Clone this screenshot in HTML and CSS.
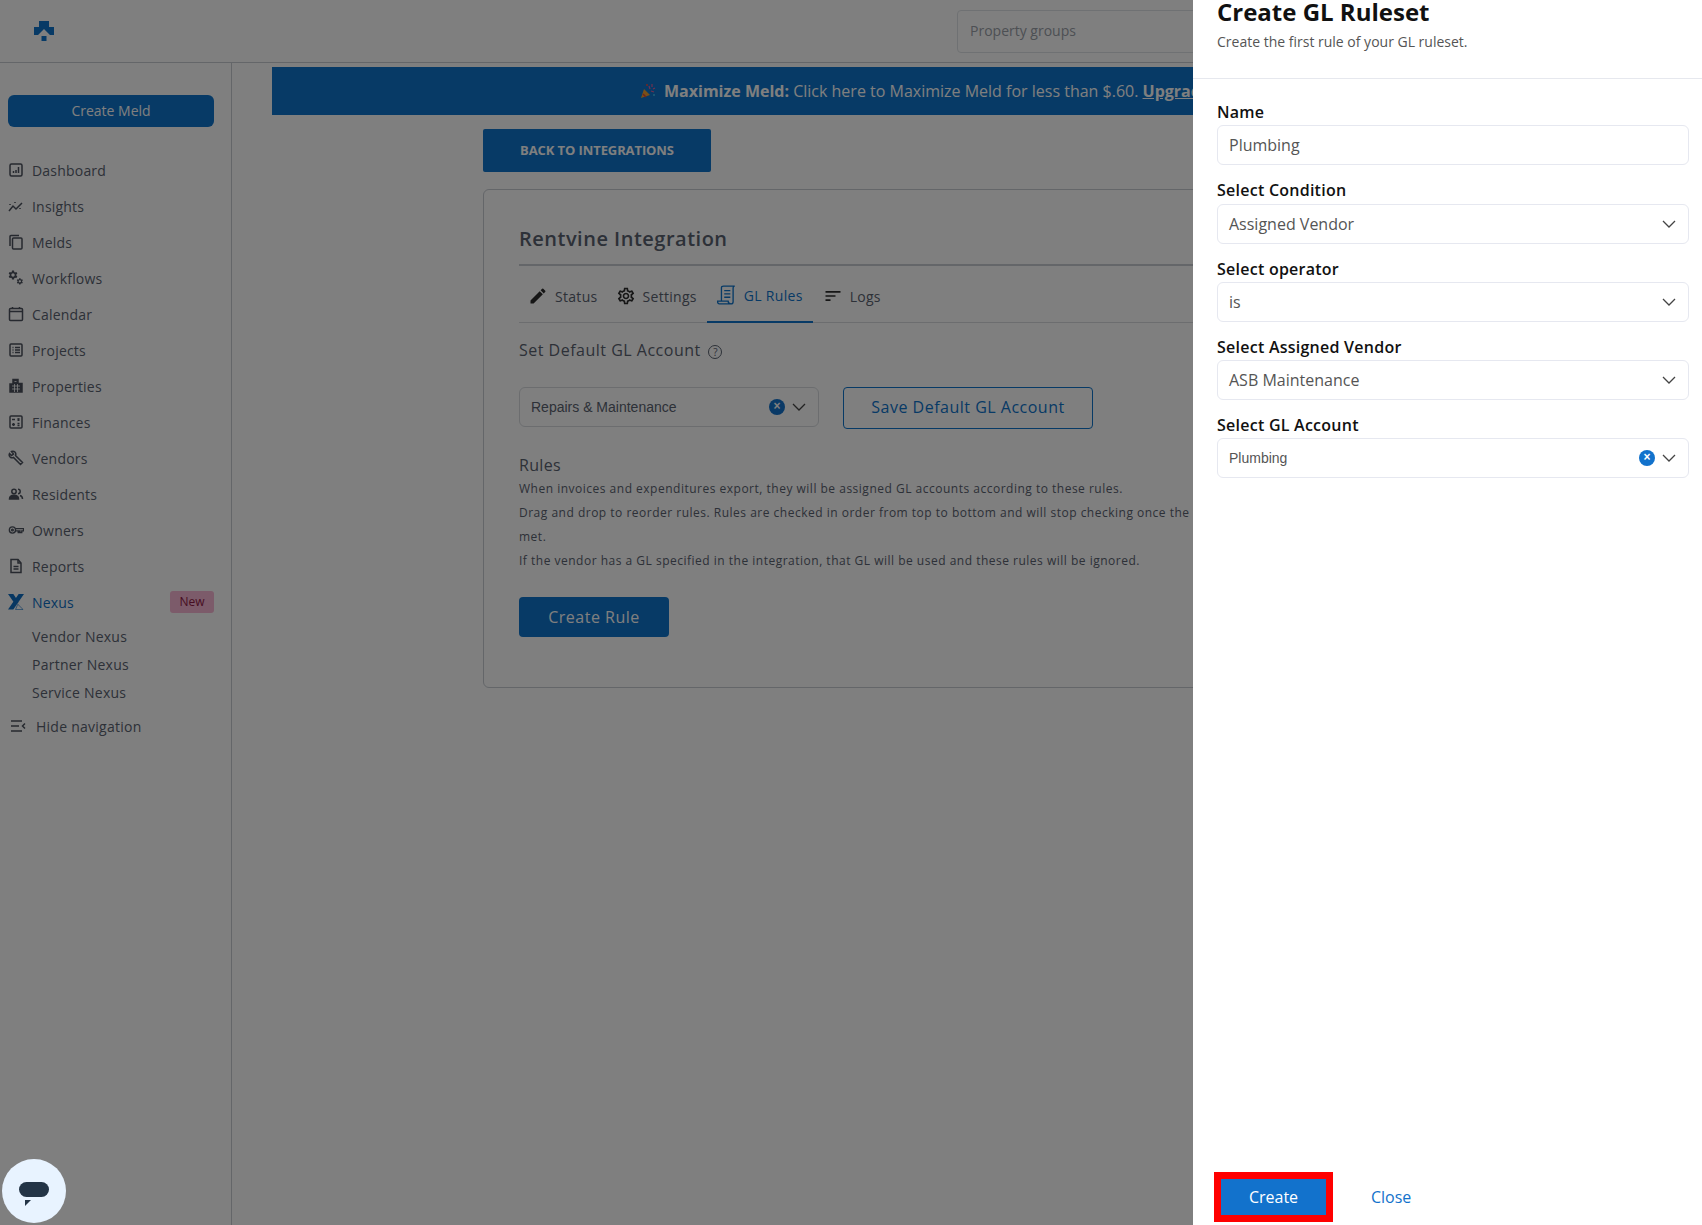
FILE: index.html
```html
<!DOCTYPE html>
<html lang="en">
<head>
	<meta charset="UTF-8">
	<title>Rentvine Integration</title>
	<link rel="stylesheet" href="styles.css">
</head>
<body>
	<div class="app">
		<header class="topbar">
			<svg class="logo" viewBox="0 0 20 20"><path d="M5 0h10v6h5v8h-4l-6-6-6 6H0V6h5z"/><path d="M7.500 15h5v5h-5z"/></svg>
			<div class="search">Property groups</div>
		</header>
		<div class="layout">
			<aside class="sidebar">
				<div class="create-meld">Create Meld</div>
				<ul class="nav">
					<li><svg viewBox="0 0 16 16"><rect x="2" y="2" width="12" height="12" rx="1.500"/><path d="M5.500 11V9M8 11V8M10.500 11V5"/></svg>Dashboard</li>
					<li><svg viewBox="0 0 16 16"><path d="M1 13l4-5 3 3 6-6"/><path d="M2 6v1M7 4v1M12 10v1"/></svg>Insights</li>
					<li><svg viewBox="0 0 16 16"><path d="M2 12V2.500A1 1 0 013 1.500h8"/><rect x="4.500" y="4" width="9.500" height="11" rx="1"/></svg>Melds</li>
					<li><svg viewBox="0 0 16 16"><g class="gear"><path id="gear" transform="translate(-.5 -.5) scale(.46)" d="M19.140 12.940c.04-.3.06-.61.06-.94 0-.32-.02-.64-.07-.94l2.030-1.580a.49.49 0 00.12-.61l-1.920-3.320a.488.488 0 00-.59-.22l-2.390.96c-.5-.38-1.030-.7-1.620-.94l-.36-2.540a.484.484 0 00-.48-.41h-3.840c-.24 0-.43.17-.47.41l-.36 2.540c-.59.24-1.130.57-1.620.94l-2.390-.96c-.22-.08-.47 0-.59.22L2.740 8.870c-.12.21-.08.47.12.61l2.030 1.580c-.05.3-.09.63-.09.94s.02.64.07.94l-2.030 1.580a.49.49 0 00-.12.61l1.920 3.320c.12.22.37.29.59.22l2.390-.96c.5.38 1.030.7 1.620.94l.36 2.540c.05.24.24.41.48.41h3.840c.24 0 .44-.17.47-.41l.36-2.540c.59-.24 1.130-.56 1.620-.94l2.390.96c.22.08.47 0 .59-.22l1.920-3.320c.12-.22.07-.47-.12-.61l-2.010-1.580zM12 15.600c-1.980 0-3.600-1.620-3.600-3.600s1.620-3.600 3.600-3.600 3.600 1.620 3.600 3.600-1.620 3.600-3.600 3.600z"/><path transform="translate(8 7.500) scale(.32)" d="M19.140 12.940c.04-.3.06-.61.06-.94 0-.32-.02-.64-.07-.94l2.030-1.580a.49.49 0 00.12-.61l-1.920-3.320a.488.488 0 00-.59-.22l-2.390.96c-.5-.38-1.030-.7-1.620-.94l-.36-2.540a.484.484 0 00-.48-.41h-3.840c-.24 0-.43.17-.47.41l-.36 2.540c-.59.24-1.130.57-1.620.94l-2.390-.96c-.22-.08-.47 0-.59.22L2.740 8.870c-.12.21-.08.47.12.61l2.030 1.580c-.05.3-.09.63-.09.94s.02.64.07.94l-2.030 1.580a.49.49 0 00-.12.61l1.920 3.320c.12.22.37.29.59.22l2.390-.96c.5.38 1.030.7 1.620.94l.36 2.540c.05.24.24.41.48.41h3.840c.24 0 .44-.17.47-.41l.36-2.540c.59-.24 1.130-.56 1.620-.94l2.390.96c.22.08.47 0 .59-.22l1.920-3.320c.12-.22.07-.47-.12-.61l-2.010-1.580zM12 15.600c-1.980 0-3.600-1.620-3.600-3.600s1.620-3.600 3.600-3.600 3.600 1.620 3.600 3.600-1.620 3.600-3.600 3.600z"/></g></svg>Workflows</li>
					<li><svg viewBox="0 0 16 16"><rect x="1.500" y="2.500" width="13" height="12" rx="1"/><path d="M1.500 5.500h13M4.500 1v2M11.500 1v2"/></svg>Calendar</li>
					<li><svg viewBox="0 0 16 16"><rect x="2" y="2" width="12" height="12" rx="1"/><path d="M4.500 5.500h1M7 5.500h5M4.500 8h1M7 8h5M4.500 10.500h1M7 10.500h5"/></svg>Projects</li>
					<li><svg viewBox="0 0 16 16"><path class="solid" d="M5 1.500h5v4h4V14H2V6h3z"/><path class="cut" d="M6.500 3.500h2M4 8h8M4 11h8M6.500 6v8M9.500 6v8"/></svg>Properties</li>
					<li><svg viewBox="0 0 16 16"><rect x="2" y="2" width="12" height="12" rx="1"/><path d="M4 5.500h3M9.500 4.500l2 2M11.500 4.500l-2 2M4 10.500h3M5.500 9v3M9.500 9.500h2M9.500 11.500h2"/></svg>Finances</li>
					<li><svg viewBox="0 0 16 16"><path d="M1.500 3.500L3.500 5.500 5.500 4 3.500 1.500a3 3 0 014 4l7 7-2 2-7-7a3 3 0 01-4-4z"/></svg>Vendors</li>
					<li><svg viewBox="0 0 16 16"><circle cx="6" cy="5.500" r="2.200"/><path class="solid" d="M1.500 13c0-2.500 2-3.800 4.500-3.800s4.500 1.300 4.500 3.800z"/><path d="M10 3.300a2.200 2.200 0 010 4.400M12 9.500c1.500.4 2.500 1.600 2.500 3.500"/></svg>Residents</li>
					<li><svg viewBox="0 0 18 16"><circle cx="5" cy="8" r="3.500"/><circle cx="5" cy="8" r="1"/><path d="M8.500 6.500h9V9h-2v2h-2V9h-1v2h-1V9H8.500"/></svg>Owners</li>
					<li><svg viewBox="0 0 16 16"><path d="M3 1.500h7l3 3.500v9.500H3z"/><path d="M5.500 8.500h5M5.500 11h5M10 1.500V5h3"/></svg>Reports</li>
					<li class="nexus">
						<svg viewBox="0 0 18 18"><path class="solid" d="M0 0h6l6 9-3 4zM12 0h6L6 17.500H0z"/><path d="M11 11.500l6 6H8.500z"/></svg>
						Nexus
						<span class="badge">New</span>
					</li>
				</ul>
				<ul class="subnav">
					<li>Vendor Nexus</li>
					<li>Partner Nexus</li>
					<li>Service Nexus</li>
				</ul>
				<div class="hide-nav"><svg viewBox="0 0 16 16"><path d="M1 3h11M1 8h8M1 13h11M15 5.500L12.500 8l2.500 2.500"/></svg>Hide navigation</div>
			</aside>
			<main class="main">
				<div class="banner">
					<svg class="popper" viewBox="0 0 16 16"><path d="M1 15l3-9 6 6z" fill="#f0a030"/><path d="M3 11l3 3" stroke="#e0443c" stroke-width="1.500"/><path d="M9 3l1 3M12 1v3M13 6l2-1M11 8l3 1" stroke="#e060a0" stroke-width="1.200"/><circle cx="7" cy="2" r="1" fill="#f04a40"/><circle cx="14" cy="12" r="1" fill="#40c0f0"/></svg>
					<b>Maximize Meld:</b>&nbsp;Click here to Maximize Meld for less than $.60.&nbsp;<b><u>Upgrade Now</u></b>
				</div>
				<div class="content">
					<div class="back-btn">BACK TO INTEGRATIONS</div>
					<section class="card">
						<h2 class="card-title">Rentvine Integration</h2>
						<div class="tabs">
							<div class="tab tab-status"><svg viewBox="0 0 24 24"><path d="M3 17.250V21h3.750L17.810 9.940l-3.750-3.750L3 17.250zM20.710 7.040a1 1 0 000-1.410l-2.340-2.340a1 1 0 00-1.410 0l-1.830 1.830 3.750 3.750 1.830-1.830z"/></svg>Status</div>
							<div class="tab"><svg viewBox="0 0 24 24"><path d="M19.430 12.980c.04-.32.07-.64.07-.98 0-.34-.03-.66-.07-.98l2.110-1.650c.19-.15.24-.42.12-.64l-2-3.460c-.09-.16-.26-.25-.44-.25-.06 0-.12.01-.17.03l-2.490 1c-.52-.4-1.080-.73-1.690-.98l-.38-2.650C14.460 2.180 14.250 2 14 2h-4c-.25 0-.46.18-.49.42l-.38 2.650c-.61.25-1.170.59-1.690.98l-2.490-1c-.06-.02-.12-.03-.18-.03-.17 0-.34.09-.43.25l-2 3.460c-.13.22-.07.49.12.64l2.110 1.650c-.04.32-.07.65-.07.98 0 .33.03.66.07.98l-2.110 1.650c-.19.15-.24.42-.12.64l2 3.460c.09.16.26.25.44.25.06 0 .12-.01.17-.03l2.490-1c.52.4 1.080.73 1.690.98l.38 2.650c.03.24.24.42.49.42h4c.25 0 .46-.18.49-.42l.38-2.650c.61-.25 1.170-.59 1.690-.98l2.490 1c.06.02.12.03.18.03.17 0 .34-.09.43-.25l2-3.460c.12-.22.07-.49-.12-.64l-2.110-1.650zm-1.980-1.710c.04.31.05.52.05.73 0 .21-.02.43-.05.73l-.14 1.130.89.7 1.080.84-.7 1.210-1.270-.51-1.040-.42-.9.68c-.43.32-.84.56-1.250.73l-1.060.43-.16 1.130-.2 1.350h-1.400l-.19-1.350-.16-1.130-1.060-.43c-.43-.18-.83-.41-1.230-.71l-.91-.7-1.060.43-1.270.51-.7-1.210 1.080-.84.89-.7-.14-1.130c-.03-.31-.05-.54-.05-.74s.02-.43.05-.73l.14-1.130-.89-.7-1.080-.84.7-1.210 1.270.51 1.040.42.9-.68c.43-.32.84-.56 1.250-.73l1.060-.43.16-1.130.2-1.350h1.390l.19 1.350.16 1.130 1.060.43c.43.18.83.41 1.230.71l.91.7 1.060-.43 1.270-.51.7 1.210-1.070.85-.89.7.14 1.130zM12 8c-2.210 0-4 1.790-4 4s1.790 4 4 4 4-1.790 4-4-1.790-4-4-4zm0 6c-1.100 0-2-.9-2-2s.9-2 2-2 2 .9 2 2-.9 2-2 2z"/></svg>Settings</div>
							<div class="tab active"><svg class="scroll" viewBox="0 0 18 18"><path d="M4 14V2.500C4 1.500 5 1 6 1h10c-1 0-1.500.7-1.500 1.500V15c0 1-1 2-2 2H2c-1 0-1.500-1-1.500-2.500h9.500c0 1.200.7 2.500 2.500 2.500"/><path d="M6.500 5h5.500M6.500 8h5.500M6.500 11h5.500"/></svg>GL Rules</div>
							<div class="tab"><svg viewBox="0 0 24 24"><path d="M3 18h6v-2H3v2zM3 6v2h18V6H3zm0 7h12v-2H3v2z"/></svg>Logs</div>
						</div>
						<div class="default-label">Set Default GL Account <span class="help">?</span></div>
						<div class="default-row">
							<div class="select">
								Repairs &amp; Maintenance
								<span class="clear">&#215;</span>
								<svg class="chevron" viewBox="0 0 14 8"><path d="M1 1l6 6 6-6"/></svg>
							</div>
							<div class="save-btn">Save Default GL Account</div>
						</div>
						<h3 class="rules-title">Rules</h3>
						<p class="rules-text">When invoices and expenditures export, they will be assigned GL accounts according to these rules.<br>
						Drag and drop to reorder rules. Rules are checked in order from top to bottom and will stop checking once the first rule is<br>
						met.<br>
						If the vendor has a GL specified in the integration, that GL will be used and these rules will be ignored.</p>
						<div class="create-rule">Create Rule</div>
					</section>
				</div>
			</main>
		</div>

		<div class="overlay"></div>

		<aside class="panel">
			<div class="panel-head">
				<h1>Create GL Ruleset</h1>
				<p>Create the first rule of your GL ruleset.</p>
			</div>
			<form class="panel-form">
				<div class="field">
					<label>Name</label>
					<div class="input">Plumbing</div>
				</div>
				<div class="field field-condition">
					<label>Select Condition</label>
					<div class="input">Assigned Vendor<svg class="chevron" viewBox="0 0 14 8"><path d="M1 1l6 6 6-6"/></svg></div>
				</div>
				<div class="field">
					<label>Select operator</label>
					<div class="input">is<svg class="chevron" viewBox="0 0 14 8"><path d="M1 1l6 6 6-6"/></svg></div>
				</div>
				<div class="field">
					<label>Select Assigned Vendor</label>
					<div class="input">ASB Maintenance<svg class="chevron" viewBox="0 0 14 8"><path d="M1 1l6 6 6-6"/></svg></div>
				</div>
				<div class="field">
					<label>Select GL Account</label>
					<div class="input input-arial">Plumbing<span class="clear">&#215;</span><svg class="chevron" viewBox="0 0 14 8"><path d="M1 1l6 6 6-6"/></svg></div>
				</div>
			</form>
			<div class="panel-foot">
				<div class="create-btn">Create</div>
				<div class="close-btn">Close</div>
			</div>
		</aside>

		<div class="chat">
			<svg viewBox="0 0 30 24"><rect width="30" height="15" rx="7.500"/><path d="M6 18h6l-6 6z"/></svg>
		</div>
	</div>
</body>
</html>
```

FILE: styles.css
```css
*{
	margin: 0px;
	padding: 0px;
	box-sizing: border-box;
}
ul{
	list-style: none;
}
body{
	font-family: "Open Sans", "Liberation Sans", sans-serif;
	color: #5a6270;
	background-color: #fff;
}
.app{
	width: 1702px;
	height: 1225px;
	position: relative;
	overflow: hidden;
	display: flex;
	flex-direction: column;
}

/* top bar */
.topbar{
	height: 63px;
	flex: none;
	display: flex;
	align-items: center;
	justify-content: space-between;
	padding-left: 34px;
	border-bottom: 1px solid #c8ccd2;
}
.logo{
	width: 20px;
	height: 20px;
	margin-top: -1px;
	fill: #0e74cc;
}
.search{
	width: 400px;
	height: 43px;
	margin-right: 345px;
	padding-left: 12px;
	line-height: 40px;
	font-size: 14px;
	color: #9aa0a8;
	border: 1px solid #dfe2e6;
	border-radius: 4px;
}

/* sidebar */
.layout{
	flex: 1;
	display: flex;
	min-height: 0;
}
.sidebar{
	width: 232px;
	flex: none;
	padding: 32px 17px 0 8px;
	border-right: 1px solid #c8ccd2;
}
.create-meld{
	height: 32px;
	line-height: 32px;
	text-align: center;
	font-size: 14px;
	color: #fff;
	background-color: #0e74cc;
	border-radius: 6px;
}
.nav{
	margin-top: 25px;
}
.nav>li{
	height: 36px;
	display: flex;
	align-items: center;
	font-size: 14px;
	font-weight: 500;
	letter-spacing: .2px;
}
.nav svg,
.hide-nav svg{
	width: 16px;
	height: 16px;
	flex: none;
	margin-right: 8px;
	fill: none;
	stroke: #4c525e;
	stroke-width: 1.500;
}
.nav svg .solid{
	fill: #4c525e;
}
.nav svg .cut{
	stroke: #fff;
	stroke-width: .8;
}
.nav svg .gear{
	fill: #4c525e;
	stroke: none;
}
.nexus{
	color: #0e6fc4;
}
.nav .nexus svg{
	stroke: #0e6fc4;
	stroke-width: .7;
}
.nav .nexus svg .solid{
	fill: #0e6fc4;
	stroke: none;
}
.badge{
	margin-left: auto;
	margin-top: -1px;
	width: 44px;
	height: 22px;
	line-height: 21px;
	text-align: center;
	font-size: 12px;
	letter-spacing: 0px;
	color: #8e1a45;
	background-color: #f9b6d4;
	border-radius: 3px;
}
.subnav{
	margin-top: 3px;
	padding-left: 24px;
}
.subnav>li{
	height: 28px;
	line-height: 28px;
	font-size: 14px;
	font-weight: 500;
	letter-spacing: .25px;
}
.hide-nav{
	display: flex;
	align-items: center;
	height: 36px;
	margin-top: 1px;
	padding-left: 2px;
	font-size: 14px;
	font-weight: 500;
	letter-spacing: .25px;
}
.hide-nav svg{
	margin-right: 10px;
}

/* main column */
.main{
	flex: 1;
	min-width: 0;
	padding: 4px 0 0 40px;
}
.banner{
	height: 48px;
	display: flex;
	align-items: center;
	padding-left: 368px;
	font-size: 16px;
	color: #fff;
	background-color: #0e74cc;
	white-space: nowrap;
}
.popper{
	width: 16px;
	height: 16px;
	margin-right: 8px;
	fill: none;
}
.content{
	padding: 14px 0 0 211px;
}
.back-btn{
	width: 228px;
	height: 43px;
	line-height: 43px;
	text-align: center;
	font-size: 13px;
	font-weight: 700;
	letter-spacing: -.1px;
	color: #fff;
	background-color: #0e74cc;
	border-radius: 2px;
}
.card{
	width: 1180px;
	height: 499px;
	margin-top: 17px;
	padding: 0 35px;
	border: 1px solid #c8ccd2;
	border-radius: 6px;
}
.card-title{
	height: 76px;
	padding-top: 34px;
	line-height: 30px;
	font-size: 20px;
	font-weight: 600;
	letter-spacing: .5px;
	border-bottom: 2px solid #c8ccd2;
}
.tabs{
	display: flex;
	height: 57px;
	border-bottom: 1px solid #d8dbdf;
}
.tab{
	display: flex;
	align-items: center;
	height: 57px;
	padding: 3px 10px 0;
	font-size: 14px;
	letter-spacing: .3px;
}
.tab svg{
	width: 20px;
	height: 20px;
	margin-right: 7px;
	fill: #2d2d2d;
}
.tab-status{
	padding-left: 9px;
	padding-right: 8px;
}
.tab.active{
	color: #0e74cc;
	border-bottom: 2px solid #0e74cc;
}
.tab svg.scroll{
	fill: none;
	stroke: #0e74cc;
	stroke-width: 1.200;
}
.default-label{
	margin-top: 14px;
	line-height: 26px;
	font-size: 16px;
	letter-spacing: .5px;
}
.help{
	display: inline-block;
	width: 14px;
	height: 14px;
	margin-left: 3px;
	line-height: 12px;
	text-align: center;
	font-size: 10px;
	letter-spacing: 0px;
	vertical-align: 0px;
	border: 1px solid #5a6270;
	border-radius: 50%;
}
.default-row{
	display: flex;
	gap: 24px;
	margin-top: 24px;
}
.select{
	display: flex;
	align-items: center;
	width: 300px;
	height: 40px;
	padding: 0 12px 0 11px;
	font-family: "Liberation Sans", sans-serif;
	font-size: 14px;
	border: 1px solid #d8dbdf;
	border-radius: 6px;
}
.clear{
	width: 16px;
	height: 16px;
	margin-left: auto;
	line-height: 15px;
	text-align: center;
	font-family: "Liberation Sans", sans-serif;
	font-size: 12px;
	font-weight: 700;
	color: #fff;
	background-color: #1272cc;
	border-radius: 50%;
}
.chevron{
	width: 14px;
	height: 8px;
	flex: none;
	fill: none;
	stroke: #444;
	stroke-width: 1.300;
}
.clear+.chevron{
	margin-left: 7px;
}
.save-btn{
	width: 250px;
	height: 42px;
	line-height: 39px;
	text-align: center;
	font-size: 16px;
	letter-spacing: .5px;
	color: #0e74cc;
	border: 1px solid #0e74cc;
	border-radius: 4px;
}
.rules-title{
	margin-top: 24px;
	line-height: 24px;
	font-size: 16px;
	font-weight: 400;
	letter-spacing: .3px;
}
.rules-text{
	line-height: 24px;
	font-size: 12px;
	letter-spacing: .5px;
	white-space: nowrap;
}
.create-rule{
	width: 150px;
	height: 40px;
	margin-top: 24px;
	line-height: 40px;
	text-align: center;
	font-size: 16px;
	letter-spacing: .5px;
	color: #fff;
	background-color: #0e74cc;
	border-radius: 4px;
}

/* dimmed backdrop and the drawer on top of it */
.overlay{
	position: absolute;
	top: 0;
	right: 0;
	bottom: 0;
	left: 0;
	background-color: rgba(0,0,0,.5);
}
.panel{
	position: absolute;
	top: 0;
	right: 0;
	bottom: 0;
	width: 509px;
	display: flex;
	flex-direction: column;
	background-color: #fff;
}
.panel-head{
	height: 79px;
	flex: none;
	padding-left: 24px;
	border-bottom: 1px solid #e6e8ee;
}
.panel-head h1{
	margin-top: -5px;
	line-height: 34px;
	font-size: 24px;
	font-weight: 700;
	color: #111;
}
.panel-head p{
	margin-top: 3px;
	line-height: 20px;
	font-size: 14px;
	color: #555;
}
.panel-form{
	flex: 1;
	padding: 22px 13px 0 24px;
}
.field{
	height: 78px;
}
.field-condition{
	height: 79px;
}
.field label{
	display: block;
	line-height: 22px;
	font-size: 16px;
	font-weight: 600;
	letter-spacing: .25px;
	color: #111;
}
.input{
	display: flex;
	align-items: center;
	justify-content: space-between;
	height: 40px;
	margin-top: 2px;
	padding: 0 12px 0 11px;
	font-size: 16px;
	color: #555;
	border: 1px solid #e6e8f0;
	border-radius: 6px;
}
.field-condition .input{
	margin-top: 3px;
}
.input-arial{
	font-family: "Liberation Sans", sans-serif;
	font-size: 14px;
}
.panel-foot{
	height: 52px;
	flex: none;
	display: flex;
	align-items: flex-start;
	margin-bottom: 1px;
	padding-left: 28px;
}
.create-btn{
	width: 105px;
	height: 36px;
	line-height: 36px;
	text-align: center;
	font-size: 16px;
	font-weight: 500;
	color: #fff;
	background-color: #1272cc;
	outline: 7px solid #f00;
	margin-top: 7px;
}
.close-btn{
	margin-left: 45px;
	margin-top: 7px;
	line-height: 36px;
	font-size: 16px;
	color: #1272cc;
}
.chat{
	position: absolute;
	left: 2px;
	bottom: 2px;
	width: 64px;
	height: 64px;
	display: flex;
	align-items: center;
	justify-content: center;
	background-color: #e8f3ff;
	border-radius: 50%;
}
.chat svg{
	width: 30px;
	height: 24px;
	margin-top: 6px;
	fill: #233446;
}
```
